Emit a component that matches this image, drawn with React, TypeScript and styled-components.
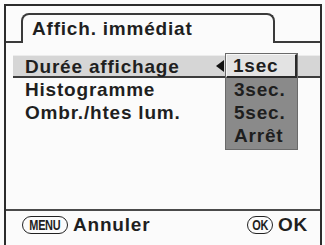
import styled, { createGlobalStyle } from "styled-components";

const GlobalStyle = createGlobalStyle`
  html, body {
    margin: 0;
    padding: 0;
    background: #fbfbfb;
  }
  body {
    font-family: "Liberation Sans", Arial, sans-serif;
    color: #1f1f1f;
  }
`;

const Screen = styled.div`
  width: 325px;
  height: 245px;
  overflow: hidden;
  padding: 4px 0 0 4px;
  box-sizing: border-box;
`;

const Frame = styled.div`
  position: relative;
  width: 318px;
  height: 241px;
  box-sizing: border-box;
  border: 2px solid #2c2c2c;
  border-bottom: none;
  display: flex;
  flex-direction: column;
`;

const Header = styled.div`
  height: 37px;
  display: flex;
  align-items: flex-end;
  flex: none;
`;

const Line = styled.div<{ $width?: number }>`
  height: 0;
  border-bottom: 2px solid #3a3a3a;
  width: ${(p) => (p.$width ? `${p.$width}px` : "auto")};
  flex: ${(p) => (p.$width ? "none" : "1")};
`;

const Tab = styled.div`
  width: 254px;
  height: 30px;
  box-sizing: border-box;
  border: 2px solid #3a3a3a;
  border-bottom: none;
  border-radius: 8px 8px 0 0;
  padding: 3px 0 0 9px;
`;

const Label = styled.div`
  font-size: 19px;
  font-weight: 700;
  letter-spacing: 0.8px;
  line-height: 21px;
  white-space: nowrap;
`;

const List = styled.div`
  margin-top: 12px;
  flex: 1;
`;

const Row = styled.div<{ $active?: boolean }>`
  height: 23px;
  box-sizing: border-box;
  margin-left: 7px;
  padding-left: 12px;
  font-size: 19px;
  font-weight: 700;
  letter-spacing: 0.8px;
  line-height: 21px;
  white-space: nowrap;
  background: ${(p) => (p.$active ? "#d6d6d6" : "transparent")};
  border-top: 1px solid ${(p) => (p.$active ? "#ececec" : "transparent")};
  border-bottom: 2px solid ${(p) => (p.$active ? "#3c3c3c" : "transparent")};
`;

const Arrow = styled.div`
  position: absolute;
  left: 210px;
  top: 54px;
  width: 0;
  height: 0;
  border-top: 6px solid transparent;
  border-bottom: 6px solid transparent;
  border-right: 8px solid #111;
`;

const Popup = styled.div`
  position: absolute;
  left: 219px;
  top: 47px;
  width: 73px;
  height: 97px;
  box-sizing: border-box;
  background: #8a8a8a;
  border: 1px solid #6a6a6a;
`;

const Option = styled.div<{ $active?: boolean }>`
  height: ${(p) => (p.$active ? 24 : 23)}px;
  box-sizing: border-box;
  padding-left: ${(p) => (p.$active ? 6 : 7)}px;
  font-size: 19px;
  font-weight: 700;
  letter-spacing: 0.8px;
  line-height: 21px;
  color: #1e1e1e;
  background: ${(p) => (p.$active ? "#e3e3e3" : "transparent")};
  border-top: 1px solid ${(p) => (p.$active ? "#f8f8f8" : "transparent")};
  border-left: 1px solid ${(p) => (p.$active ? "#f8f8f8" : "transparent")};
  border-right: 2px solid ${(p) => (p.$active ? "#2a2a2a" : "transparent")};
  border-bottom: 2px solid ${(p) => (p.$active ? "#2a2a2a" : "transparent")};
`;

const Footer = styled.div`
  flex: none;
  height: 36px;
  box-sizing: border-box;
  border-top: 2px solid #4a4a4a;
  padding: 0 12px 6px 16px;
  display: flex;
  align-items: center;
  justify-content: space-between;
`;

const Action = styled.div`
  display: flex;
  align-items: center;
  gap: 5px;
  font-size: 19px;
  font-weight: 700;
  letter-spacing: 0.8px;
`;

const Key = styled.span<{ $w: number }>`
  display: inline-flex;
  align-items: center;
  justify-content: center;
  width: ${(p) => p.$w}px;
  height: 18px;
  box-sizing: border-box;
  border: 1.5px solid #222;
  border-radius: 9px;
  overflow: hidden;
`;

const KeyText = styled.span`
  display: inline-block;
  font-size: 14px;
  font-weight: 700;
  letter-spacing: -0.4px;
  line-height: 1;
  transform: scaleX(0.78);
`;

const options = ["1sec", "3sec.", "5sec.", "Arrêt"];

export default function App() {
  return (
    <>
      <GlobalStyle />
      <Screen>
        <Frame>
          <Header>
            <Line $width={15} />
            <Tab>
              <Label>Affich. immédiat</Label>
            </Tab>
            <Line />
          </Header>
          <List>
            <Row $active>Durée affichage</Row>
            <Row>Histogramme</Row>
            <Row>Ombr./htes lum.</Row>
          </List>
          <Arrow />
          <Popup>
            {options.map((o, i) => (
              <Option key={o} $active={i === 0}>
                {o}
              </Option>
            ))}
          </Popup>
          <Footer>
            <Action>
              <Key $w={46}>
                <KeyText>MENU</KeyText>
              </Key>
              Annuler
            </Action>
            <Action>
              <Key $w={26}>
                <KeyText>OK</KeyText>
              </Key>
              OK
            </Action>
          </Footer>
        </Frame>
      </Screen>
    </>
  );
}
